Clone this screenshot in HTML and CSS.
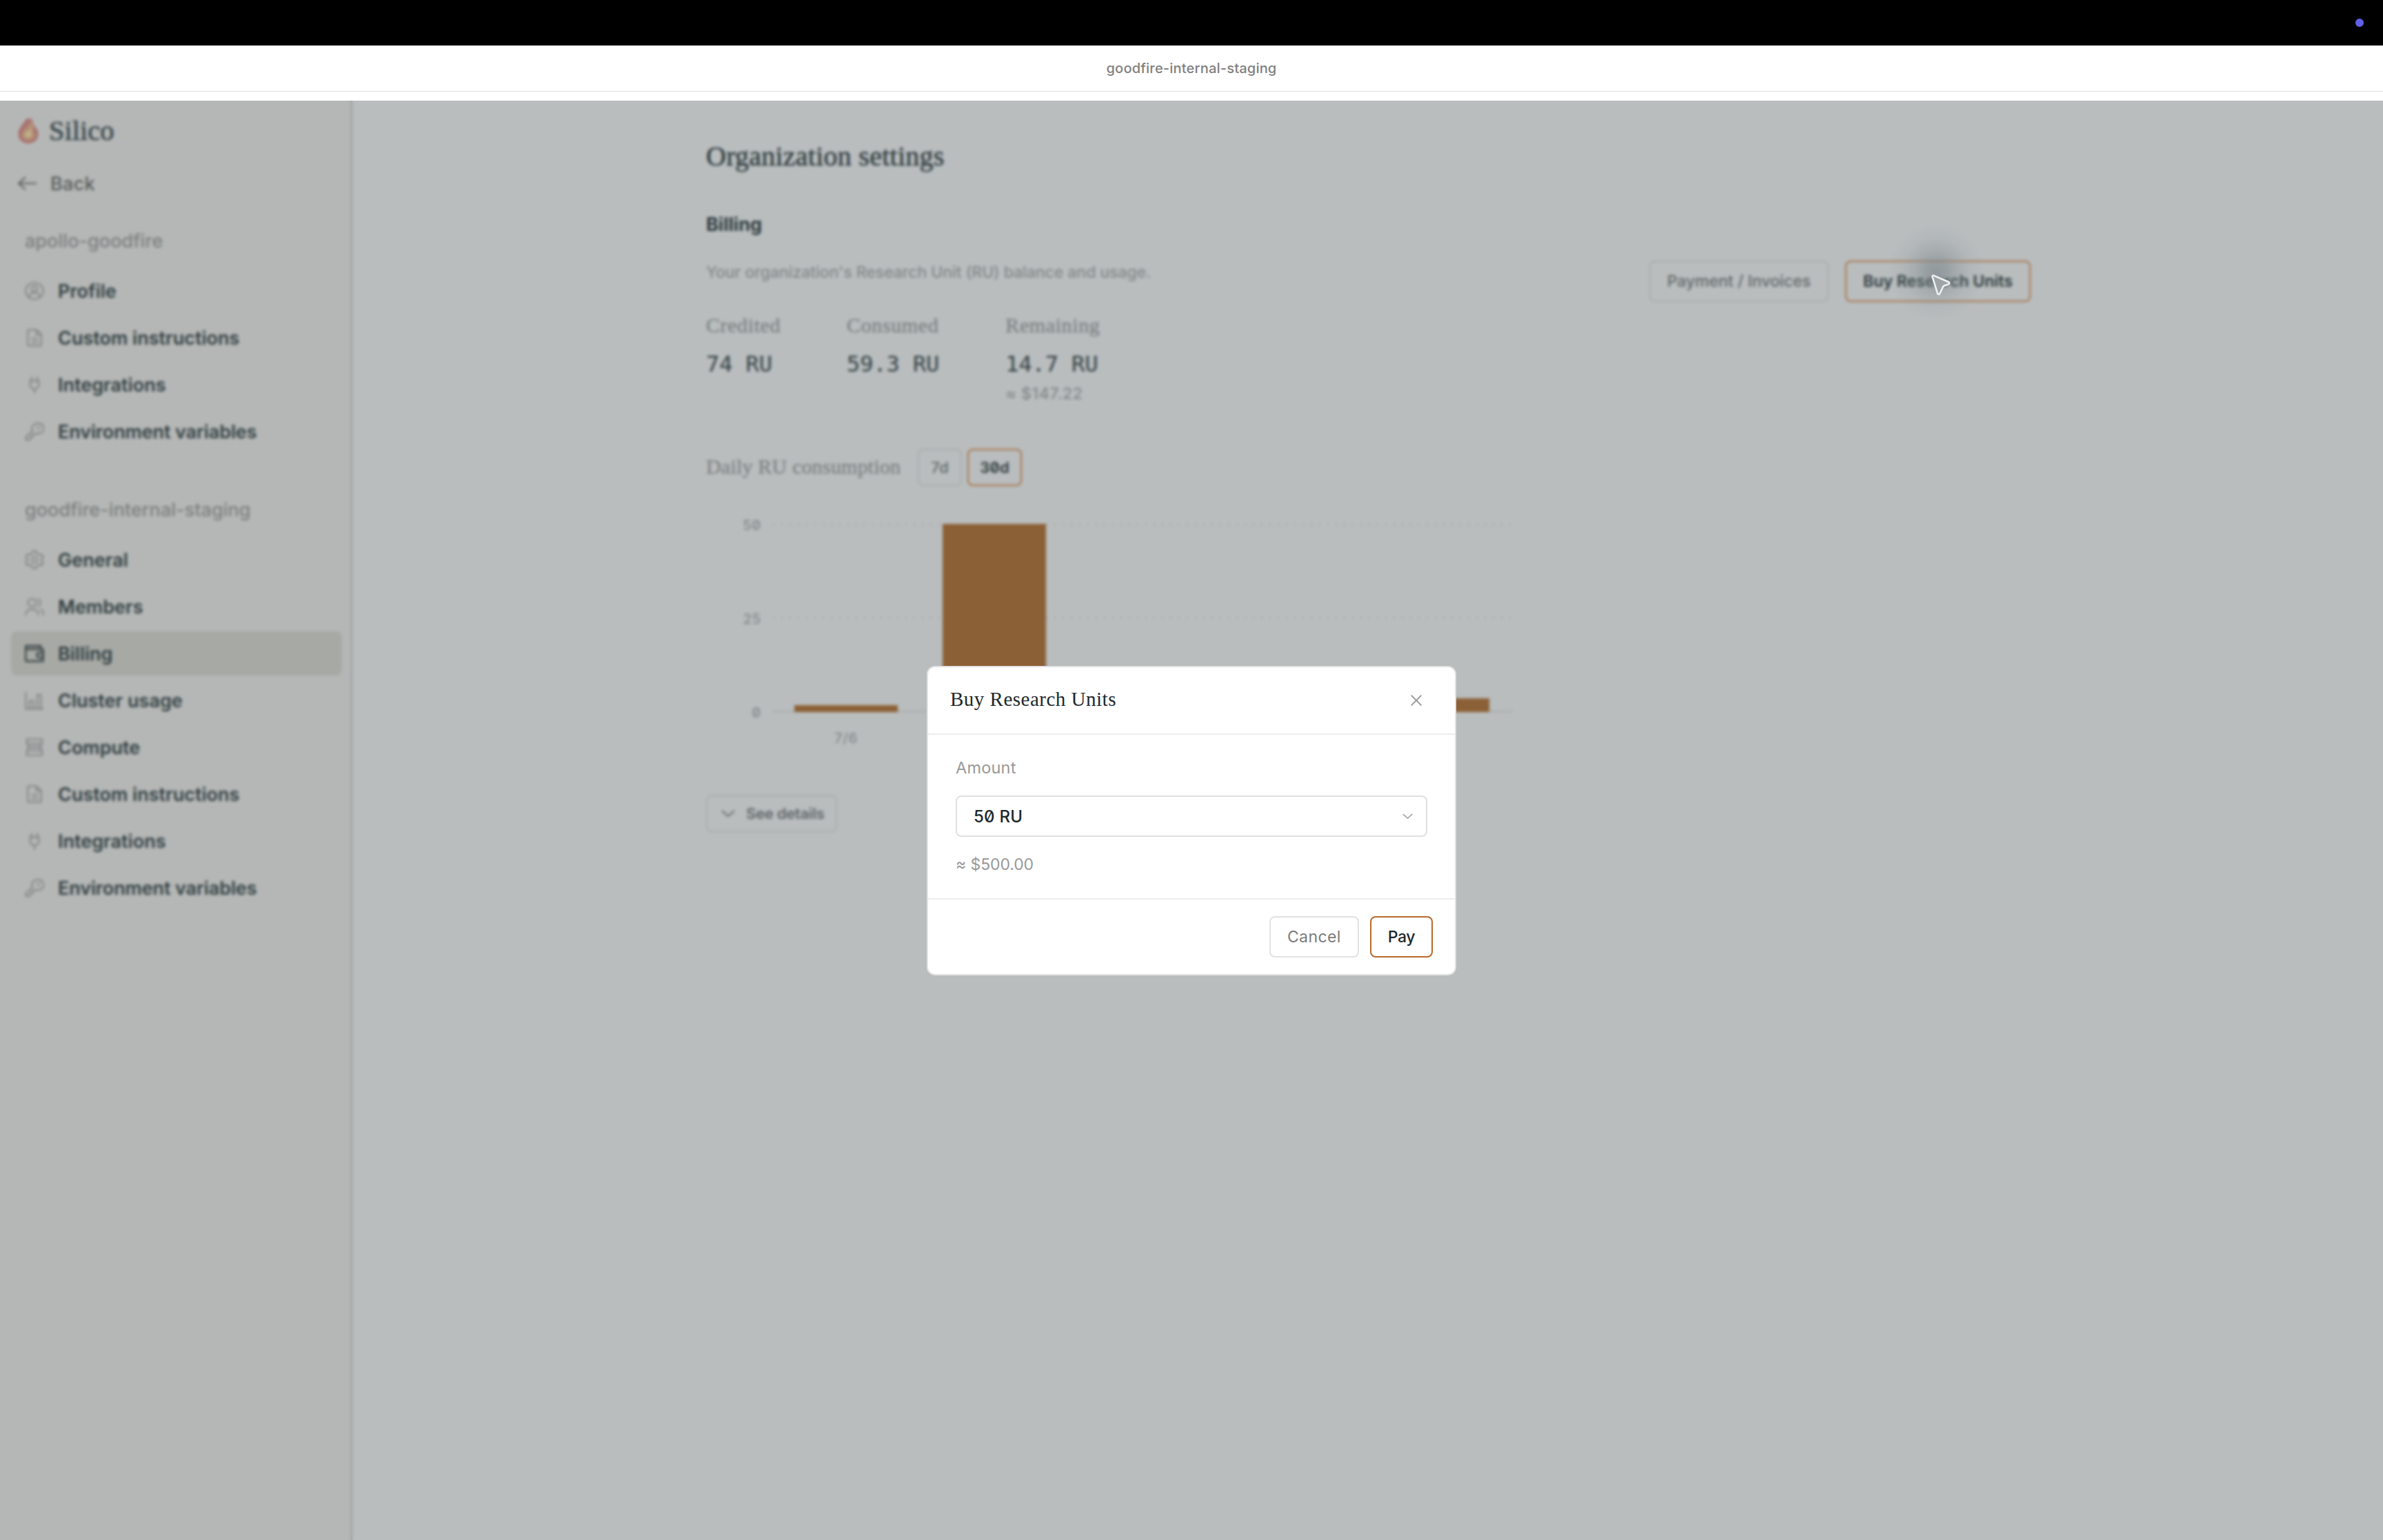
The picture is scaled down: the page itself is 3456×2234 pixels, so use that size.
FILE: index.html
```html
<!DOCTYPE html>
<html lang="en">
<head>
<meta charset="utf-8">
<title>goodfire-internal-staging</title>
<link rel="stylesheet" href="styles.css">
</head>
<body>
<svg class="sprite" aria-hidden="true">
  <symbol id="i-user" viewBox="0 0 24 24"><ellipse cx="12" cy="12" rx="11" ry="10.200"/><circle cx="12" cy="9.400" r="3.600"/><path d="M5.200 20c.6-3.800 3.400-6 6.800-6s6.200 2.200 6.800 6"/></symbol>
  <symbol id="i-doc" viewBox="0 0 24 24"><path d="M5 2h9.500l5.800 5.500V21a1 1 0 0 1-1 1H4.700a1 1 0 0 1-1-1V3a1 1 0 0 1 1-1z"/><path d="M14.500 2v6H20M8 13h8.500M8 17.500h8.500"/></symbol>
  <symbol id="i-plug" viewBox="0 0 24 24"><path d="M8.500 2v5M15.500 2v5M5.500 7.500h13M6.500 7.500v4.500a5.500 5.500 0 0 0 11 0V7.500M12 17.500V23"/></symbol>
  <symbol id="i-key" viewBox="0 0 24 24"><path d="M15.800 2a6.800 6.300 0 1 1-1.600 12l-2.200 1.800H9.800v2.400H7.500V20.500L5.600 22.300H1.400v-3.600l8.300-7.400A6.500 6.300 0 0 1 15.800 2z"/><circle cx="17" cy="7.500" r=".8"/></symbol>
  <symbol id="i-gear" viewBox="0 0 24 24"><path d="M9.800 1.500h4.400l1 3 2.200 1.300 3.200-.7 2.200 3.800-2.100 2.400v1.500l2.100 2.400-2.200 3.800-3.200-.7-2.200 1.300-1 3H9.800l-1-3-2.200-1.300-3.200.7-2.200-3.800 2.100-2.400v-1.500L1.200 8.900l2.200-3.800 3.200.7 2.200-1.300z"/><circle cx="12" cy="12" r="3.500"/></symbol>
  <symbol id="i-users" viewBox="0 0 24 24"><circle cx="9" cy="7" r="5"/><path d="M1.200 23v-2a6 6 0 0 1 6-5.500h3.600a6 6 0 0 1 6 5.500v2M16 2.300a5 5 0 0 1 0 9.400M19 15.300a5.500 5.500 0 0 1 4 5.200V23"/></symbol>
  <symbol id="i-wallet" viewBox="0 0 24 24"><path d="M19.500 6.500V2.500H2a1 1 0 0 0-1 1v17a1 1 0 0 0 1 1h20.500v-15H2M23 11h-5a3 3 0 0 0 0 6h5z"/></symbol>
  <symbol id="i-chart" viewBox="0 0 24 24"><path d="M1.200 1.500v21h22M6 22v-9.500h4.500V22M15.500 22V5H20v17"/></symbol>
  <symbol id="i-rack" viewBox="0 0 24 24"><path d="M2.500 1.800h19v5.700h-19zM4 7.500h16v8.500H4zM2.500 16h19v6h-19zM4 11.800h16"/></symbol>
  <symbol id="i-chev" viewBox="0 0 20 10"><path d="M1 1l9 8 9-8"/></symbol>
</svg>

<div class="menubar"><span class="rec"></span></div>
<header class="titlebar">goodfire-internal-staging</header>

<div class="stage">
  <div class="app">
    <aside class="sidebar">
      <div class="brand">
        <svg class="flame" viewBox="0 0 30 38"><path class="f1" d="M11 3c2-3 7-3 9.500 0 2 3 1.500 6 4 9.500C27.500 16 29.500 18.500 29.500 23.500c0 8-6 13.500-14.500 13.500S.5 31.500.5 23.500C.5 14 7.500 10 11 3z"/><path class="f2" d="M17 5l5 2c1 4 2 6 0 9-1 2 3 4 3 8.500 0 5-4 8.500-10 8.500S5 29.500 5 24.500C5 17 15 15 17 5z"/><path class="f3" d="M21 12c0 3-2.500 6-1.500 8.500 1.500 3 1 8.500-4.500 8.500s-7-6-3-8.500S19 16 21 12z"/></svg>
        <span>Silico</span>
      </div>
      <div class="back">
        <svg class="arrow" viewBox="0 0 28 20"><path d="M1 10h26M11 1L1 10l10 9"/></svg>
        <span>Back</span>
      </div>
      <h2 class="group">apollo-goodfire</h2>
      <nav class="list">
        <a><svg><use href="#i-user"/></svg><span>Profile</span></a>
        <a><svg><use href="#i-doc"/></svg><span>Custom instructions</span></a>
        <a><svg><use href="#i-plug"/></svg><span>Integrations</span></a>
        <a><svg><use href="#i-key"/></svg><span class="long">Environment variables</span></a>
      </nav>
      <h2 class="group second">goodfire-internal-staging</h2>
      <nav class="list">
        <a><svg><use href="#i-gear"/></svg><span>General</span></a>
        <a><svg><use href="#i-users"/></svg><span>Members</span></a>
        <a class="on"><svg><use href="#i-wallet"/></svg><span>Billing</span></a>
        <a><svg><use href="#i-chart"/></svg><span>Cluster usage</span></a>
        <a><svg><use href="#i-rack"/></svg><span>Compute</span></a>
        <a><svg><use href="#i-doc"/></svg><span>Custom instructions</span></a>
        <a><svg><use href="#i-plug"/></svg><span>Integrations</span></a>
        <a><svg><use href="#i-key"/></svg><span class="long">Environment variables</span></a>
      </nav>
    </aside>

    <main class="main">
      <h1>Organization settings</h1>
      <h3>Billing</h3>
      <section class="summary">
        <div>
          <p class="lead">Your organization's Research Unit (RU) balance and usage.</p>
          <dl class="stats">
            <div><dt>Credited</dt><dd>74 RU</dd></div>
            <div><dt>Consumed</dt><dd>59.3 RU</dd></div>
            <div><dt>Remaining</dt><dd>14.7 RU</dd><dd class="usd">≈ $147.22</dd></div>
          </dl>
        </div>
        <div class="actions">
          <button class="btn">Payment / Invoices</button>
          <button class="btn primary">Buy Research Units</button>
        </div>
      </section>

      <div class="chart-head">
        <h4>Daily RU consumption</h4>
        <button class="btn small">7d</button>
        <button class="btn small primary">30d</button>
      </div>
      <div class="chart">
        <div class="yaxis"><span>50</span><span>25</span><span>0</span></div>
        <div class="plot">
          <svg class="grid" viewBox="0 0 1072 274"><path class="dots" d="M0 2H1074M0 137.500H1074"/><path d="M0 273H1074"/></svg>
          <div class="bars">
            <i style="height:10px"></i><i style="height:273px"></i><i style="height:0"></i><i style="height:0"></i><i style="height:20px"></i>
          </div>
        </div>
        <div class="xaxis"><span>7/6</span></div>
      </div>
      <button class="btn details"><svg><use href="#i-chev"/></svg>See details</button>
    </main>
  </div>

  <div class="overlay"></div>

  <div class="dialog" role="dialog">
    <div class="d-head">
      <h2>Buy Research Units</h2>
      <svg class="close" viewBox="0 0 16 16"><path d="M.7.700l14.600 14.600M15.300.700L.700 15.300"/></svg>
    </div>
    <div class="d-body">
      <label>Amount</label>
      <div class="select"><span>50 RU</span><svg><use href="#i-chev"/></svg></div>
      <p>≈ $500.00</p>
    </div>
    <div class="d-foot">
      <button class="btn">Cancel</button>
      <button class="btn primary">Pay</button>
    </div>
  </div>

  <div class="pointer">
    <svg viewBox="0 0 30 34"><path d="M2.500 4.500c-.2-1.600 1-2.400 2.400-1.700l21 9.200c1.800.9 1.700 2.600-.2 3.300l-6 2.200c-1 .4-1.600 1-2 2l-4.500 9.500c-.8 1.600-2.700 1.500-3.200-.3z"/></svg>
  </div>
</div>
</body>
</html>
```
FILE: styles.css
```css
* { box-sizing: border-box; margin: 0; padding: 0; }

body {
  width: 3456px;
  height: 2234px;
  overflow: hidden;
  background: #fff;
  color: #1d282b;
  font-family: Inter, "Liberation Sans", sans-serif;
}

h1, h2, h3, h4 { font-weight: 400; }
svg { display: block; fill: none; stroke: currentColor; stroke-width: 2; flex: none; }
.sprite { position: absolute; width: 0; height: 0; }

.menubar { height: 66px; background: #000; display: flex; justify-content: flex-end; align-items: center; padding-right: 28px; }
.rec { width: 12px; height: 12px; border-radius: 50%; background: #615fe8; }

.titlebar {
  height: 67px;
  margin-bottom: 13px;
  border-bottom: 1px solid #dfdfdf;
  text-align: center;
  font-size: 20px;
  font-weight: 500;
  line-height: 66px;
  letter-spacing: .2px;
  color: #7f7f7f;
}

.stage { position: relative; height: 2088px; overflow: hidden; }
.app { display: flex; height: 100%; background: #b9bdbe; }

/* Sidebar */
.sidebar { width: 511px; height: 100%; border-right: 2px solid #989c9c; background: #b5b7b6; padding: 16px 13px 0 16px; }
.brand { display: flex; align-items: center; gap: 15px; height: 56px; padding-left: 10px; font: 40.5px/56px "Liberation Serif", serif; color: #36454a; -webkit-text-stroke: .6px; }
.flame { width: 30px; height: 38px; stroke: none; }
.f1 { fill: #a87270; }
.f2 { fill: #b18d76; }
.f3 { fill: #bfae85; }
.back { display: flex; align-items: center; gap: 19px; height: 48px; margin-top: 24px; padding-left: 10px; font-size: 27px; font-weight: 500; letter-spacing: .3px; color: #565b5b; }
.arrow { width: 28px; height: 20px; }
.group { height: 60px; margin: 30px 0 10px; padding-left: 20px; font-size: 27px; line-height: 60px; color: #7b7f7f; font-weight: 500; letter-spacing: .04px; }
.group.second { margin-top: 52px; }
.list { display: flex; flex-direction: column; gap: 4px; }
.list a { display: flex; align-items: center; gap: 20px; height: 64px; padding-left: 20px; border-radius: 8px; font-size: 27px; font-weight: 600; color: #313e41; }
.list .long { letter-spacing: -.12px; }
.list svg { width: 28px; height: 28px; color: #858989; }
.list .on { background: #a7a9a5; }
.list .on svg { color: #3c4748; stroke-width: 2.4; }

/* Page */
.main { width: 2434px; padding: 57px 0 0 513px; }
h1 { font: 40px/48px "Liberation Serif", serif; letter-spacing: .25px; color: #303c3f; -webkit-text-stroke: .6px; }
h3 { margin-top: 55px; font-size: 27px; font-weight: 700; line-height: 40px; color: #2c383b; }
.summary { display: flex; justify-content: space-between; margin-top: 31px; }
.lead { font-size: 23px; line-height: 36px; color: #848888; font-weight: 500; letter-spacing: -.05px; }
.stats { display: flex; gap: 96px; margin-top: 39px; }
dt { font: 30px/40px "Liberation Serif", serif; letter-spacing: .6px; color: #7d8282; -webkit-text-stroke: .4px; }
dd { font: 32px/44px "DejaVu Sans Mono", monospace; letter-spacing: -.1px; color: #374346; margin-top: 14px; -webkit-text-stroke: .2px; }
.usd { margin-top: 4px; font: 500 23px/34px Inter, sans-serif; letter-spacing: .65px; color: #848888; -webkit-text-stroke: 0; }
.actions { display: flex; gap: 24px; align-items: flex-start; margin-top: 1px; }

.btn {
  display: flex;
  align-items: center;
  justify-content: center;
  height: 60px;
  padding: 0 24px;
  border: 2px solid #a9adad;
  border-radius: 8px;
  background: none;
  font: 500 23px/30px Inter, sans-serif;
  color: #606767;
}
.btn.primary { border-color: #a76f42; color: #2c383b; font-weight: 600; letter-spacing: .05px; }

.chart-head { display: flex; align-items: center; gap: 8px; margin-top: 63px; height: 54px; }
.chart-head h4 { font: 30px/40px "Liberation Serif", serif; letter-spacing: .2px; color: #7d8282; -webkit-text-stroke: .4px; margin: 0 17px 3px 0; }
.btn.small { height: 54px; padding: 0 17px; font-size: 22px; letter-spacing: .4px; font-feature-settings: "zero"; }
.btn.small.primary { padding: 0 16px; letter-spacing: .1px; }

.chart { display: grid; grid-template-columns: 80px 1072px; column-gap: 16px; margin-top: 54px; width: 1168px; }
.yaxis { display: flex; flex-direction: column; justify-content: space-between; align-items: flex-end; height: 300px; margin: -11px 0; font: 500 20px/28px Inter, sans-serif; letter-spacing: .8px; font-feature-settings: "zero"; color: #858989; }
.plot { position: relative; height: 274px; }
.grid { width: 1072px; height: 274px; stroke: #a7abab; overflow: visible; }
.dots { stroke-dasharray: 4 8; }
.bars { position: absolute; inset: 0; display: flex; align-items: flex-end; justify-content: space-around; }
.bars i { width: 150px; background: #8c6036; }
.xaxis { grid-column: 2; display: grid; grid-template-columns: repeat(5, 1fr); margin-top: 20px; font: 500 20px/28px Inter, sans-serif; letter-spacing: .8px; text-align: center; color: #858989; }
.details { margin-top: 68px; height: 54px; padding: 0 17px 0 20px; gap: 16px; font-size: 22px; font-weight: 600; letter-spacing: -.3px; }
.details svg { width: 20px; height: 10px; }

/* Softens everything behind the dialog */
.overlay { position: absolute; inset: 0; backdrop-filter: blur(2px); }

/* Dialog */
.dialog { position: absolute; left: 1344px; top: 820px; width: 768px; height: 449px; border: 2px solid #e2e2e2; border-radius: 12px; background: #fff; }
.d-head { display: flex; align-items: center; justify-content: space-between; height: 98px; padding: 0 48px 0 32px; border-bottom: 2px solid #ededed; }
.d-head h2 { margin-bottom: 5px; font: 29px/36px "Liberation Serif", serif; letter-spacing: .5px; }
.close { width: 16px; height: 16px; stroke: #949494; stroke-width: 1.800; }
.d-body { height: 239px; padding: 30px 40px 0; border-bottom: 2px solid #ededed; color: #999; font-size: 23px; }
.d-body label { display: block; font-size: 23.5px; letter-spacing: .2px; line-height: 36px; }
.select { display: flex; align-items: center; justify-content: space-between; height: 60px; margin: 22px 0; padding: 0 19px 0 24px; border: 2px solid #e0e0e0; border-radius: 8px; font-size: 24px; font-weight: 500; letter-spacing: .25px; color: #1d282b; font-feature-settings: "zero"; }
.select svg { width: 15px; height: 8px; color: #999; }
.d-body p { line-height: 36px; letter-spacing: -.1px; }
.d-foot { display: flex; justify-content: flex-end; gap: 16px; padding: 24px 32px; }
.d-foot .btn { border-color: #e2e2e2; color: #7b7b7b; font-weight: 400; letter-spacing: .4px; }
.d-foot .primary { border-color: #b9692a; color: #1d282b; font-weight: 500; letter-spacing: -.45px; }

/* Mouse pointer */
.pointer { position: absolute; left: 2738px; top: 178px; width: 140px; height: 140px; background: radial-gradient(closest-side, rgba(125,135,141,.68), rgba(125,135,141,.56) 20%, rgba(125,135,141,.3) 44%, rgba(125,135,141,.1) 70%, rgba(125,135,141,0)); }
.pointer svg { position: absolute; left: 62px; top: 73px; width: 30px; height: 34px; fill: #9fa5a7; stroke: #f0f2f2; stroke-width: 2.500; }
```
